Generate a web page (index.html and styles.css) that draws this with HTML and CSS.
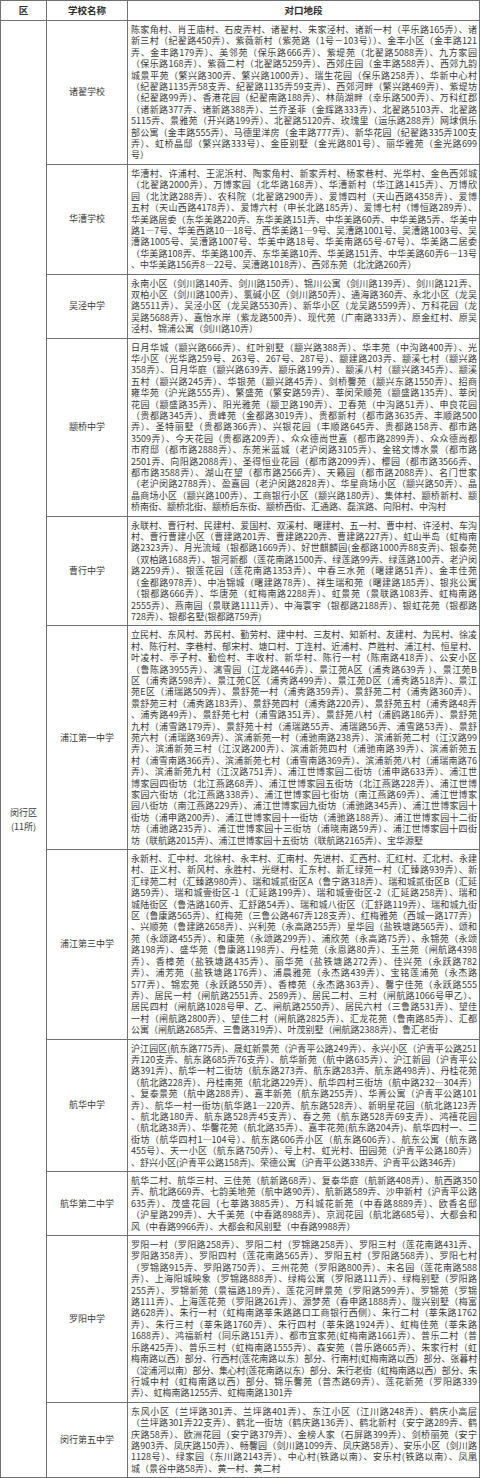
FILE: index.html
```html
<!DOCTYPE html>
<html lang="zh-CN">
<head>
<meta charset="utf-8">
<title>闵行区对口地段</title>
<link rel="stylesheet" href="styles.css">
</head>
<body>
<table class="tbl">
<colgroup><col class="c1"><col class="c2"><col class="c3"></colgroup>
<thead>
<tr><th>区</th><th>学校名称</th><th>对口地段</th></tr>
</thead>
<tbody>
<tr>
<td class="dist" rowspan="11"><span class="dl">闵行区</span><span class="dl">(11所)</span></td>
<td class="school">诸翟学校</td>
<td class="area">
<span class="ln">陈家角村、肖王庙村、石皮弄村、诸翟村、朱家泾村、诸新一村（平乐路165弄）、诸</span>
<span class="ln">新三村（纪翟路450弄）、紫薇新村（紫苑路（1号－103号））、金丰小区（金丰路121</span>
<span class="ln">弄、金丰路179弄）、美邻苑（保乐路666弄）、紫堤苑（北翟路5088弄）、九方家园</span>
<span class="ln">（保乐路168弄）、紫薇二村（北翟路5259弄）、西郊庄园（金丰路588弄）、西郊九韵</span>
<span class="ln">城景平苑（繁兴路300弄、繁兴路1000弄）、瑞生花园（保乐路258弄）、华新中心村</span>
<span class="ln">（纪翟路1135弄58支弄、纪翟路1135弄59支弄）、西郊河畔（繁兴路469弄）、紫堤坊</span>
<span class="ln">（纪翟路99弄）、香港花园（纪翟南路188弄）、林荫湖畔（幸乐路500弄）、万科红郡</span>
<span class="ln">（诸新路377弄、诸新路388弄）、兰乔圣菲（金辉路333弄）、北翟路5103弄、北翟路</span>
<span class="ln">5115弄、景雅苑（开兴路199弄）、北翟路5120弄、玫瑰里（运乐路288弄）网球俱乐</span>
<span class="ln">部公寓（金丰路555弄）、马德里洋房（金丰路777弄）、新华花园（纪翟路335弄100支</span>
<span class="ln">弄）、虹桥晶邸（繁兴路333号）、金臣别墅（金光路801号）、丽华雅苑（金光路699</span>
<span class="ln">号）</span>
</td>
</tr>
<tr>
<td class="school">华漕学校</td>
<td class="area">
<span class="ln">华漕村、许浦村、王泥浜村、陶家角村、新家弄村、杨家巷村、光华村、金色西郊城</span>
<span class="ln">（北翟路2000弄）、万博家园（北华路168弄）、华漕新村（华江路1415弄）、万博欣</span>
<span class="ln">园（北沈路288弄）、农科院（北翟路2900弄）、爱博四村（天山西路4358弄）、爱博</span>
<span class="ln">五村（天山西路4178弄）、爱博六村（申长北路185弄）、爱博七村（博恒路289弄）、</span>
<span class="ln">华美路居委（东华美路220弄、东华美路151弄、中华美路60弄、中华美路5弄、华美中</span>
<span class="ln">路1—7号、华美西路10—18号、西华美路1—9号、吴漕路1001号、吴漕路1003号、吴</span>
<span class="ln">漕路1005号、吴漕路1007号、华美中路18号、华美南路65号-67号）、华美路二居委</span>
<span class="ln">（华美路108弄、华美路100弄、东华美路10弄、华美路151弄、中华美路60弄6—13号</span>
<span class="ln">、中华美路156弄8—22号、吴漕路1018弄）、西郊东苑（北沈路260弄）</span>
</td>
</tr>
<tr>
<td class="school">吴泾中学</td>
<td class="area">
<span class="ln">永南小区（剑川路140弄、剑川路150弄）、锦川公寓（剑川路139弄）、剑川路121弄、</span>
<span class="ln">双柏小区（剑川路100弄）、氯碱小区（剑川路50弄）、通海路360弄、永北小区（龙吴</span>
<span class="ln">路5511弄）、吴泾小区（龙吴路5530弄）、新华小区（龙吴路5599弄）、万科花园（龙</span>
<span class="ln">吴路5688弄）、嘉怡水岸（紫龙路500弄）、现代苑（广南路333弄）、原金红村、原吴</span>
<span class="ln">泾村、锦浦公寓（剑川路10弄）</span>
</td>
</tr>
<tr>
<td class="school">颛桥中学</td>
<td class="area">
<span class="ln">日月华城（颛兴路666弄）、红叶别墅（颛兴路388弄）、华丰苑（中沟路400弄）、光</span>
<span class="ln">华小区（光华路259号、263号、267号、287号）、颛建路203弄、颛溪七村（颛兴路</span>
<span class="ln">358弄）、日月华庭（颛兴路639弄、颛乐路199弄）、颛溪八村（颛兴路345弄）、颛溪</span>
<span class="ln">五村（颛兴路245弄）、华银苑（颛兴路45弄）、剑桥馨苑（颛兴东路1550弄）、招商</span>
<span class="ln">雍华苑（沪光路555弄）、繁盛苑（繁安路59弄）、莘闵荣顺苑（颛盛路135弄）、莘闵</span>
<span class="ln">花园（颛盛路35弄）、阳光雅苑（颛卫路190弄）、卫春苑（中沟路51弄）、申良花园</span>
<span class="ln">（贵都路345弄）、贵峰苑（金都路3019弄）、贵都新村（都市路3635弄、丰顺路500</span>
<span class="ln">弄）、圣特丽墅（贵都路366弄）、兴银花园（丰顺路645弄、贵都路158弄、都市路</span>
<span class="ln">3509弄）、今天花园（贵都路209弄）、众众德尚世嘉（都市路2899弄）、众众德尚都</span>
<span class="ln">市府邸（都市路2888弄）、东苑米蓝城（老沪闵路3105弄）、金铭文博水景（都市路</span>
<span class="ln">2501弄、向阳路2088弄）、圣得恒业花园（都市路2099弄）、樱园（都市路3566弄、</span>
<span class="ln">都市路3588弄）、湖山在望（都市路2566弄）、天籁园（都市路2088弄）、名门世家</span>
<span class="ln">（老沪闵路2788弄）、盈嘉园（老沪闵路2828弄）、华星商场小区（颛兴路50弄）、晶</span>
<span class="ln">晶商场小区（颛兴路100弄）、工商银行小区（颛兴路180弄）、集体村、颛桥新村、颛</span>
<span class="ln">桥南街、颛桥北街、颛桥后东街、颛桥西街、汇通路、磊滨路、向阳村、中沟村</span>
</td>
</tr>
<tr>
<td class="school">曹行中学</td>
<td class="area">
<span class="ln">永联村、曹行村、民建村、爱国村、双溪村、曙建村、五一村、曹中村、许泾村、车沟</span>
<span class="ln">村、曹行曹建小区（曹建路201弄、曹建路220弄、曹建路227弄）、虹山半岛（虹梅南</span>
<span class="ln">路2323弄）、月光流域（银都路1669弄）、好世麒麟园(金都路1000弄88支弄)、银泰苑</span>
<span class="ln">（双柏路1688弄）、银河新都（莲花南路1500弄、绿莲路99弄、绿莲路100弄、老沪闵</span>
<span class="ln">路2259弄）、银莲花园（莲花南路1353弄）、中春三水苑（曙建路51弄）、金丰佳苑</span>
<span class="ln">（金都路978弄）、中冶锦城（曙建路78弄）、祥生瑞和苑（曙建路185弄）、银兆公寓</span>
<span class="ln">（银都路666弄）、华唐苑（虹梅南路2288弄）、虹景苑（景联路1083弄、虹梅南路</span>
<span class="ln">2555弄）、燕南园（景联路1111弄）、中海寰宇（银都路2188弄）、银虹花苑（银都路</span>
<span class="ln">728弄）、银都名墅(银都路759弄)</span>
</td>
</tr>
<tr>
<td class="school">浦江第一中学</td>
<td class="area">
<span class="ln">立民村、东风村、苏民村、勤劳村、建中村、三友村、知新村、友建村、为民村、徐凌</span>
<span class="ln">村、陈行村、李巷村、郁宋村、塘口村、丁连村、近浦村、芦胜村、浦江村、恒星村、</span>
<span class="ln">叶凌村、亭子村、勤俭村、丰收村、新华村、陈行一村（陈南路418弄）、公安小区</span>
<span class="ln">（鲁陈路3955弄）、漓雪园（江龙路446弄）、景江苑A区（浦秀路639弄 ）、景江苑B</span>
<span class="ln">区（浦秀路598弄）、景江苑C区（浦秀路499弄）、景江苑D区（浦秀路518弄）、景江</span>
<span class="ln">苑E区（浦瑞路509弄）、景舒苑一村（浦秀路359弄）、景舒苑二村（浦秀路360弄）、</span>
<span class="ln">景舒苑三村（浦秀路183弄）、景舒苑四村（浦秀路220弄）、景舒苑五村（浦秀路48弄</span>
<span class="ln">、浦秀路49弄）、景舒苑七村（浦雪路351弄）、景舒苑八村（浦鸥路186弄）、景舒苑</span>
<span class="ln">九村（浦雪路179弄）、景舒苑十村（浦瑞路55弄、浦瑞路56弄、浦雪路53弄）、景舒</span>
<span class="ln">苑六村（浦瑞路369弄）、滨浦新苑一村（浦驰南路238弄）、滨浦新苑二村（江汉路99</span>
<span class="ln">弄）、滨浦新苑三村（江汉路200弄）、滨浦新苑四村（浦驰南路39弄）、滨浦新苑五</span>
<span class="ln">村（浦雪南路366弄）、滨浦新苑七村（浦雪南路369弄）、滨浦新苑八村（浦瑞南路76</span>
<span class="ln">弄）、滨浦新苑九村（江汉路751弄）、浦江世博家园二街坊（浦申路633弄）、浦江世</span>
<span class="ln">博家园四街坊（北江燕路68弄）、浦江世博家园五街坊（北江燕路228弄）、浦江世博</span>
<span class="ln">家园六街坊（北江燕路338弄）、浦江世博家园七街坊（南江燕路69弄）、浦江世博家</span>
<span class="ln">园八街坊（南江燕路229弄）、浦江世博家园九街坊（浦驰路345弄）、浦江世博家园十</span>
<span class="ln">街坊（浦申路200弄）、浦江世博家园十一街坊（浦驰路188弄）、浦江世博家园十二街</span>
<span class="ln">坊（浦驰路235弄）、浦江世博家园十三街坊（浦晓南路59弄）、浦江世博家园十四街</span>
<span class="ln">坊（联航路2015弄）、浦江世博家园十五街坊（联航路2165弄）、宝华源墅</span>
</td>
</tr>
<tr>
<td class="school">浦江第三中学</td>
<td class="area">
<span class="ln">永新村、汇中村、北徐村、永丰村、汇南村、先进村、汇西村、汇红村、汇北村、永建</span>
<span class="ln">村、正义村、新风村、永胜村、光继村、汇东村、新汇绿苑一村（汇臻路939弄）、新</span>
<span class="ln">汇绿苑二村（汇臻路980弄）、瑞和城贰街区A（鲁宁路318弄）、瑞和城贰街区B（汇延</span>
<span class="ln">路59弄）、瑞和城壹街区-1（汇延路199弄）、瑞和城壹街区-2（汇延路258弄）、瑞和</span>
<span class="ln">城陆街区（鲁浩路160弄、汇舒路54弄）、瑞和城八街区（汇舒路119弄）、瑞和城九街</span>
<span class="ln">区（鲁康路565弄）、红梅苑（三鲁公路467弄128支弄）、红梅雅苑（西城一路177弄）</span>
<span class="ln">、兴顺苑（鲁建路2658弄）、兴利苑（永高路255弄）星华园（盐铁塘路565弄）、颂和</span>
<span class="ln">苑（永颂路455弄）、和康苑（永颂路299弄）、浦欣苑（永高路75弄）、永锦苑（永颂</span>
<span class="ln">路198弄）、盛华苑（鲁康路1198弄）、丹桂苑（永恩路80弄）、玉兰苑（闸航路4398</span>
<span class="ln">弄）、香樟苑（盐铁塘路435弄）、丽华苑（盐铁塘路272弄）、佳兴苑（永跃路782</span>
<span class="ln">弄）、浦芳苑（盐铁塘路176弄）、浦晨雅苑（永杰路439弄）、宝铭莲浦苑（永杰路</span>
<span class="ln">577弄）、锦宏苑（永跃路550弄）、香樟苑（永杰路363弄）、馨宁佳苑（永跃路555</span>
<span class="ln">弄）、居民一村（闸航路2551弄、2589弄）、居民二村、三村（闸航路1066号甲乙）、</span>
<span class="ln">居民四村（闸航路1028号甲、乙、闸航路2550弄）、居民六村（三鲁路531弄）、望佳</span>
<span class="ln">一村（闸航路2800弄）、望佳二村（闸航路2825弄）、汇龙花苑（鲁南路85弄）、汇都</span>
<span class="ln">公寓（闸航路2685弄、三鲁路319弄）、叶茂别墅（闸航路2388弄）、鲁汇老街</span>
</td>
</tr>
<tr>
<td class="school">航华中学</td>
<td class="area">
<span class="ln">沪江园区(航东路775弄)、晟虹新景苑（沪青平公路249弄）、永兴小区（沪青平公路251</span>
<span class="ln">弄120支弄、航东路685弄76支弄）、航华新苑（航中路635弄）、沪江新园（沪青平公</span>
<span class="ln">路391弄）、航华一村二街坊（航东路273弄、航东路283弄、航东路498弄）、丹桂花苑</span>
<span class="ln">（航北路228弄）、丹桂南苑（航北路229弄）、航华四村三街坊（航中路232—304弄）</span>
<span class="ln">、复泰景苑（航中路288弄）、嘉丰新苑（航东路255弄）、华菁公寓（沪青平公路101</span>
<span class="ln">弄）、航华一村一街坊(航华路1—220弄、航东路528弄）、新明星花园（航北路123弄</span>
<span class="ln">、航北路180弄、航东路528弄45支弄）、春之苑（航东路528弄69支弄）、鸿禧花园</span>
<span class="ln">（航北路38弄）、华馨花苑（航北路35弄）、嘉丰花苑(航东路204弄)、航华四村一、二</span>
<span class="ln">街坊（航华四村1—104号）、航东路606弄小区（航东路606弄）、航东公寓（航东路</span>
<span class="ln">455号）、天一小区（航东路750弄）、号上村、虹光村、田园苑（沪青平公路180弄）</span>
<span class="ln">、舒兴小区(沪青平公路158弄)、荣德公寓（沪青平公路338弄、沪青平公路346弄）</span>
</td>
</tr>
<tr>
<td class="school">航华第二中学</td>
<td class="area">
<span class="ln">航华二村、航华三村、三佳苑（航新路68弄）、复泰华庭（航新路408弄）、航西路350</span>
<span class="ln">弄、航北路669弄、七韵美地苑（航中路90弄）、航新路589弄、沙申新村（沪青平公路</span>
<span class="ln">635弄）、茂盛花园（七莘路3885弄）、万科城花新苑（中春路8889弄）、欧香名邸</span>
<span class="ln">（沪星路299弄）、大千美苑（中春路8988弄）、京润花园（航北路685号）、大都会和</span>
<span class="ln">风（中春路9966弄）、大都会和风别墅（中春路9988弄）</span>
</td>
</tr>
<tr>
<td class="school">罗阳中学</td>
<td class="area">
<span class="ln">罗阳一村（罗阳路258弄）、罗阳二村（罗锦路258弄）、罗阳三村（莲花南路431弄、</span>
<span class="ln">罗阳路358弄）、罗阳四村（莲花南路565弄）、罗阳五村（罗阳路568弄）、罗阳七村</span>
<span class="ln">（罗锦路915弄、罗阳路750弄）、三州花苑（罗阳路800弄）、未名园（莲花南路588</span>
<span class="ln">弄）、上海阳城映象（罗锦路888弄）、绿梅公寓（罗阳路111弄）、绿梅别墅（罗阳路</span>
<span class="ln">255弄）、罗锦新苑（景福路189弄）、莲花河畔景苑（罗阳路599弄）、罗锦苑（罗锦</span>
<span class="ln">路111弄）、上海莲花苑（罗阳路261弄）、源梦苑（春申路1888弄）、陇兴别墅（梅富</span>
<span class="ln">路628弄）、朱行一村（虹梅南路莘朱路路口工商银行西侧）、朱行二村（莘朱路1762</span>
<span class="ln">弄）、朱行三村（莘朱路1760弄）、朱行四村（莘朱路1924弄）、虹梅佳苑（莘朱路</span>
<span class="ln">1688弄）、鸿福新村（同乐路151弄）、都市宜家苑(虹梅南路1661弄）、普乐二村（普</span>
<span class="ln">乐路425弄）、普乐三村（虹梅南路1555弄）、森安苑（普乐路665弄）、朱家行村（虹</span>
<span class="ln tight">梅南路以西）部分、行西村(莲花南路以东）部分、行南村(虹梅南路以西）部分、张暮村</span>
<span class="ln tight">（淀浦河以南）部分、集心村(莲花南路以东）部分、朱行老街（虹梅南路以西）部分、朱</span>
<span class="ln">行城中村（虹梅南路以西）部分、锦乐馨苑（普杰路69弄）、莲花新苑（罗阳路339</span>
<span class="ln">弄）、虹梅南路1255弄、虹梅南路1301弄</span>
</td>
</tr>
<tr>
<td class="school">闵行第五中学</td>
<td class="area">
<span class="ln">东风小区（兰坪路301弄、兰坪路401弄）、东江小区（江川路248弄）、鹤庆小高层</span>
<span class="ln">（兰坪路301弄22支弄）、鹤北一街坊（鹤庆路136弄）、鹤北新村（安宁路289弄、鹤</span>
<span class="ln">庆路58弄）、欧洲花园（安宁路379弄）、金榜人家（石屏路399弄）、剑桥丽苑（安宁</span>
<span class="ln">路903弄、凤庆路150弄）、畅馨园（剑川路1099弄、凤庆路58弄）、安乐小区（剑川路</span>
<span class="ln">1128号）、绿家园（东川路2143弄）、中心村(铁路以南）、安乐村(铁路以南）、凤凰</span>
<span class="ln">城（景谷中路58弄）、黄一村、黄二村</span>
</td>
</tr>
</tbody>
</table>
</body>
</html>
```

FILE: styles.css
```css
html, body {
  margin: 0;
  padding: 0;
  background: #ffffff;
}

body {
  font-family: "Noto Sans CJK SC", "Noto Sans", "Liberation Sans", sans-serif;
  color: #3a3a3a;
}

.tbl {
  border-collapse: collapse;
  table-layout: fixed;
  width: 479px;
}

.tbl col.c1 { width: 46px; }
.tbl col.c2 { width: 81px; }
.tbl col.c3 { width: 352px; }

.tbl th,
.tbl td {
  border: 1px solid #707070;
  padding: 0;
}

.tbl th {
  height: 19px;
  font-size: 9.5px;
  line-height: 19px;
  font-weight: bold;
  text-align: center;
  color: #2e2e2e;
}

.dist {
  vertical-align: middle;
  text-align: center;
  font-size: 9px;
  line-height: 14px;
  padding-top: 142px !important;
}

.dl {
  display: block;
}

.school {
  vertical-align: middle;
  text-align: center;
  font-size: 9px;
  line-height: 12px;
}

.area {
  vertical-align: top;
  padding: 3px 2px 3px 3px !important;
  font-size: 9px;
  line-height: 11.4px;
  text-align: justify;
}

.ln {
  display: block;
  text-align: justify;
  text-align-last: justify;
}

.ln.tight {
  letter-spacing: -0.28px;
}

.ln:last-child {
  text-align-last: auto;
}
```
